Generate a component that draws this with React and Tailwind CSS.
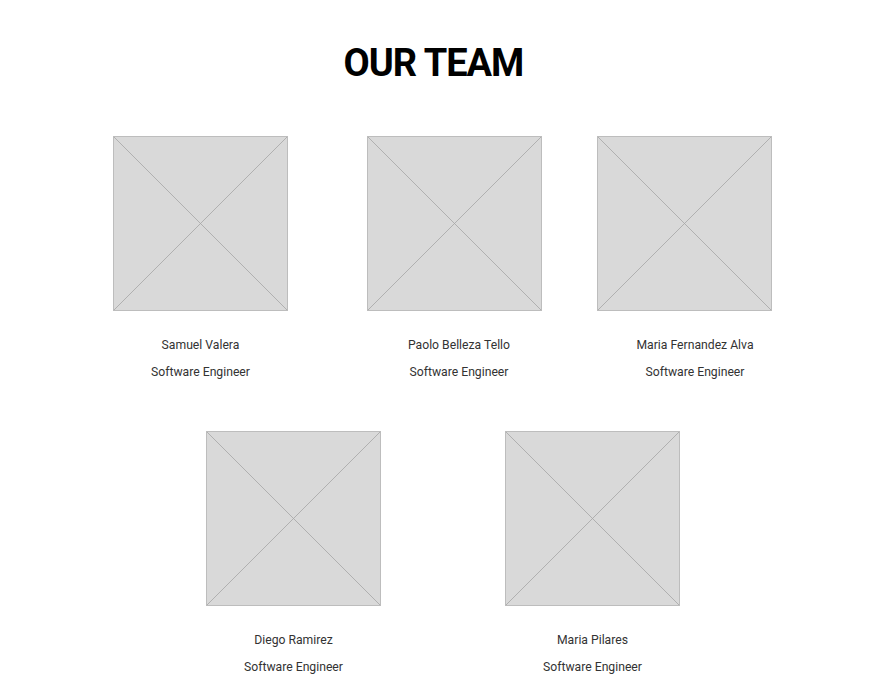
const row1 = [
  { name: 'Samuel Valera', role: 'Software Engineer', w: 'w-[175px]', ml: 'ml-[113px]' },
  { name: 'Paolo Belleza Tello', role: 'Software Engineer', w: 'w-[184px]', ml: 'ml-[79px]' },
  { name: 'Maria Fernandez Alva', role: 'Software Engineer', w: 'w-[196px]', ml: 'ml-[46px]' },
]

const row2 = [
  { name: 'Diego Ramirez', role: 'Software Engineer', w: 'w-[175px]', ml: 'ml-[206px]' },
  { name: 'Maria Pilares', role: 'Software Engineer', w: 'w-[175px]', ml: 'ml-[124px]' },
]

function Placeholder() {
  return (
    <svg width="175" height="175" viewBox="0 0 175 175" className="block">
      <rect x="0.5" y="0.5" width="174" height="174" fill="#d9d9d9" stroke="#bdbdbd" />
      <line x1="1" y1="1" x2="174" y2="174" stroke="#a6a6a6" strokeWidth="0.8" />
      <line x1="174" y1="1" x2="1" y2="174" stroke="#a6a6a6" strokeWidth="0.8" />
    </svg>
  )
}

function Member({ m }) {
  return (
    <div className={`${m.w} ${m.ml} flex flex-col shrink-0`}>
      <Placeholder />
      <div className="mt-[24px] text-center text-[12.2px] leading-[20px] text-[#333]">{m.name}</div>
      <div className="mt-[7px] text-center text-[12.2px] leading-[20px] text-[#333]">{m.role}</div>
    </div>
  )
}

export default function App() {
  return (
    <div className="w-[887px] h-[692px] bg-white overflow-hidden" style={{ fontFamily: 'Roboto, "Liberation Sans", sans-serif' }}>
      <h1 className="pt-[41px] pr-[20px] text-center text-[38px] leading-[44px] tracking-[-1px] font-bold text-black">OUR TEAM</h1>
      <div className="mt-[51px] flex">
        {row1.map(m => <Member key={m.name} m={m} />)}
      </div>
      <div className="mt-[49px] flex">
        {row2.map(m => <Member key={m.name} m={m} />)}
      </div>
    </div>
  )
}
